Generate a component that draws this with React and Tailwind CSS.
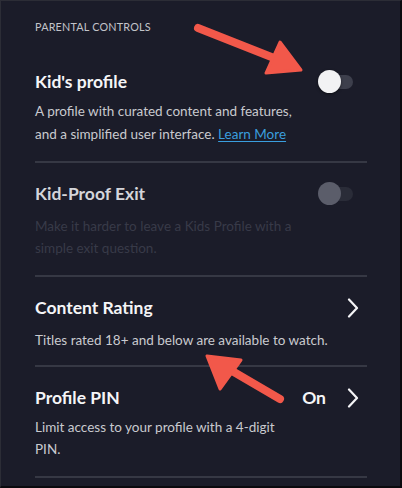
import React from "react";

const Chevron = () => (
  <svg width="12" height="20" viewBox="0 0 12 20" className="block">
    <path d="M2 1.5 L10 10 L2 18.5" fill="none" stroke="#f4f4f6" strokeWidth="2.2" strokeLinecap="round" strokeLinejoin="round" />
  </svg>
);

const Toggle = ({ disabled }) => (
  <div className="relative w-[34px] h-[24px] flex items-center">
    <div className={`ml-[4px] w-[30px] h-[14px] rounded-full ${disabled ? "bg-[#2a2c38]" : "bg-[#3d3f4c]"}`} />
    <div
      className={`absolute left-[-1px] top-[0px] w-[23px] h-[23px] rounded-full ${
        disabled ? "bg-[#5b5d6a]" : "bg-[#f2f2f4] shadow-[0_1px_3px_rgba(0,0,0,0.5)]"
      }`}
    />
  </div>
);

const Divider = () => <div className="h-[2px] bg-[#363844]" />;

export default function App() {
  return (
    <div
      className="relative w-[402px] h-[488px] overflow-hidden bg-[#1b1c29] border-l border-t border-[#2c2d36] border-r-2 border-r-[#0a0a0e] border-b-2 border-b-[#0a0a0e]"
      style={{ fontFamily: "Lato, 'Noto Sans', sans-serif" }}
    >
      <div className="pl-[34px] pr-[33px] pt-[18px]">
        <div className="text-[10.8px] leading-[16px] tracking-[0.2px] text-[#c3c4c9]">PARENTAL CONTROLS</div>

        {/* Kid's profile */}
        <div className="mt-[35px]">
          <div className="flex items-center justify-between h-[24px]">
            <div className="text-[17.5px] font-bold text-[#f5f5f7]">Kid's profile</div>
            <div className="mr-[14px]"><Toggle /></div>
          </div>
          <div className="mt-[6px] text-[13.5px] leading-[23px] text-[#c9cacf]">
            A profile with curated content and features,
            <br />
            and a simplified user interface.{" "}
            <span className="text-[#3a9ede] underline underline-offset-2">Learn More</span>
          </div>
          <div className="h-[15px]" />
          <Divider />
        </div>

        {/* Kid-Proof Exit */}
        <div>
          <div className="flex items-center justify-between h-[24px] mt-[19px]">
            <div className="text-[17.5px] font-bold text-[#d4d5da]">Kid-Proof Exit</div>
            <div className="mr-[14px]"><Toggle disabled /></div>
          </div>
          <div className="mt-[9px] text-[13.5px] leading-[22px] text-[#383a48]">
            Make it harder to leave a Kids Profile with a
            <br />
            simple exit question.
          </div>
          <div className="h-[16px]" />
          <Divider />
        </div>

        {/* Content Rating */}
        <div>
          <div className="flex items-center justify-between h-[24px] mt-[19px]">
            <div className="text-[17.5px] font-bold text-[#f5f5f7]">Content Rating</div>
            <div className="mr-[8px]"><Chevron /></div>
          </div>
          <div className="mt-[9px] text-[13.5px] leading-[23px] text-[#c9cacf]">
            Titles rated 18+ and below are available to watch.
          </div>
          <div className="h-[13px]" />
          <Divider />
        </div>

        {/* Profile PIN */}
        <div>
          <div className="flex items-center justify-between h-[24px] mt-[19px]">
            <div className="text-[17.5px] font-bold text-[#f5f5f7]">Profile PIN</div>
            <div className="flex items-center gap-[21px] mr-[8px]">
              <span className="text-[17.5px] font-bold text-[#f5f5f7]">On</span>
              <Chevron />
            </div>
          </div>
          <div className="mt-[6px] text-[13.5px] leading-[22px] text-[#c9cacf]">
            Limit access to your profile with a 4-digit
            <br />
            PIN.
          </div>
          <div className="h-[16px]" />
          <Divider />
        </div>
      </div>

      {/* Annotation arrows */}
      <svg className="absolute inset-0 pointer-events-none" width="402" height="488" viewBox="0 0 402 488">
        <g fill="#f2584a" stroke="#f2584a" strokeLinejoin="round" strokeLinecap="round">
          <line x1="197" y1="27" x2="278" y2="59" strokeWidth="8" />
          <polygon points="300,69 265,72 279,41" strokeWidth="3" />
          <line x1="279" y1="398" x2="226" y2="367" strokeWidth="8" />
          <polygon points="206,355 240,359 219,388" strokeWidth="3" />
        </g>
      </svg>
    </div>
  );
}
